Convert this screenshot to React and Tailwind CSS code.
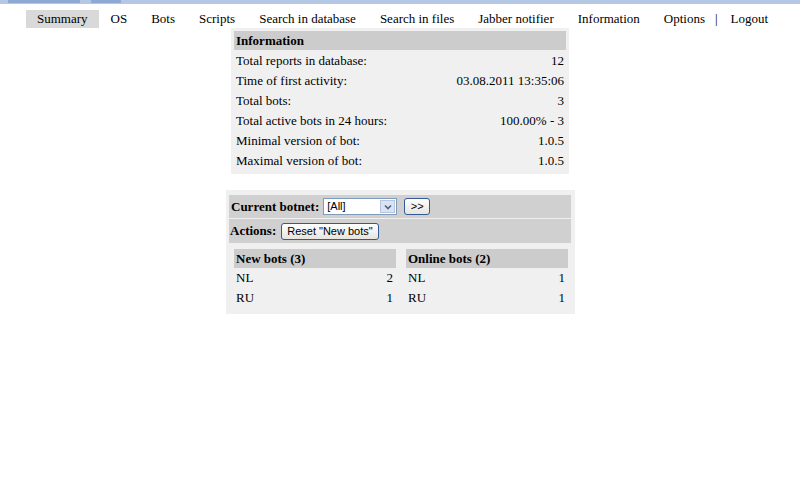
const nav = ["Summary", "OS", "Bots", "Scripts", "Search in database", "Search in files", "Jabber notifier", "Information", "Options"];

const info = [
  ["Total reports in database:", "12"],
  ["Time of first activity:", "03.08.2011 13:35:06"],
  ["Total bots:", "3"],
  ["Total active bots in 24 hours:", "100.00% - 3"],
  ["Minimal version of bot:", "1.0.5"],
  ["Maximal version of bot:", "1.0.5"],
];

const BotList = ({ title, rows }) => (
  <div className="flex flex-col w-[162px]">
    <div className="bg-[#cccccc] h-[19px] px-[2px] font-bold leading-[19px]">{title}</div>
    {rows.map(([c, n]) => (
      <div key={c} className="flex justify-between h-[20px] leading-[20px] pl-[2px] pr-[3px]">
        <span>{c}</span>
        <span>{n}</span>
      </div>
    ))}
  </div>
);

export default function App() {
  return (
    <div className="w-[800px] h-[484px] bg-white text-[13px] text-black font-['Liberation_Serif',serif]">
      <div className="h-[4px] bg-[#b4c8e6] flex">
        <div className="ml-[8px] w-[72px] h-[3px] bg-[#8ea9d4]" />
        <div className="ml-[11px] w-[30px] h-[3px] bg-[#8ea9d4]" />
      </div>

      <div className="flex items-center pl-[26px] mt-[6px] h-[18px]">
        {nav.map((n, i) => (
          <div key={n} className={`h-[18px] leading-[18px] ${i === 0 ? "bg-[#d9d9d9] px-[11px]" : "px-[12px]"}`}>{n}</div>
        ))}
        <span className="-ml-[3px] px-[1px]">|</span>
        <div className="px-[12px] leading-[18px]">Logout</div>
      </div>

      <div className="ml-[231px] w-[338px] bg-[#f0f0f0] px-[3px] pt-[3px] pb-[4px]">
        <div className="bg-[#cccccc] h-[19px] leading-[19px] font-bold px-[2px]">Information</div>
        {info.map(([k, v]) => (
          <div key={k} className="flex justify-between h-[20px] leading-[20px] px-[2px] pt-[1px]">
            <span>{k}</span>
            <span>{v}</span>
          </div>
        ))}
      </div>

      <div className="ml-[226px] mt-[16px] w-[349px] bg-[#f0f0f0] pl-[3px] pr-[4px] pt-[5px] pb-[6px]">
        <div className="bg-[#d0d0d0] h-[23px] flex items-center px-[2px] gap-[4px]">
          <span className="font-bold">Current botnet:</span>
          <div className="w-[74px] h-[17px] bg-white border border-[#7f9db9] flex items-center justify-between font-['Liberation_Sans',sans-serif] text-[11px] pl-[3px]">
            <span>[All]</span>
            <div className="w-[15px] h-[13px] mr-[1px] bg-[#dbe3f3] border border-[#b6c5e4] flex items-center justify-center">
              <svg width="8" height="6" viewBox="0 0 8 6"><path d="M1 1.5 L4 4.5 L7 1.5" stroke="#4d6185" strokeWidth="1.6" fill="none" /></svg>
            </div>
          </div>
          <div className="ml-[3px] w-[26px] h-[17px] border border-[#335a96] rounded-[3px] bg-gradient-to-b from-white to-[#e6e4de] font-['Liberation_Sans',sans-serif] text-[11px] flex items-center justify-center">&gt;&gt;</div>
        </div>
        <div className="bg-[#d0d0d0] h-[24px] mt-[1px] flex items-center px-[1px] gap-[5px]">
          <span className="font-bold">Actions:</span>
          <div className="h-[17px] px-[5px] border border-[#335a96] rounded-[3px] bg-gradient-to-b from-white to-[#e6e4de] font-['Liberation_Sans',sans-serif] text-[11px] flex items-center">Reset "New bots"</div>
        </div>
        <div className="flex gap-[10px] mt-[6px] pl-[5px]">
          <BotList title="New bots (3)" rows={[["NL", "2"], ["RU", "1"]]} />
          <BotList title="Online bots (2)" rows={[["NL", "1"], ["RU", "1"]]} />
        </div>
      </div>
    </div>
  );
}
